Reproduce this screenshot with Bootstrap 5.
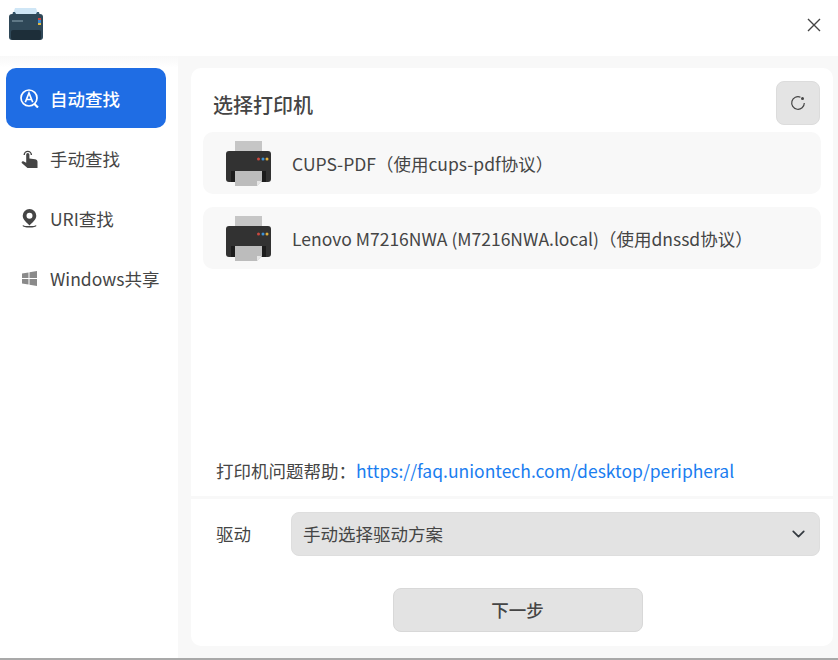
<!DOCTYPE html>
<html lang="zh-CN">
<head>
    <meta charset="UTF-8">
    <meta name="viewport" content="width=device-width, initial-scale=1.0">
    <title>选择打印机</title>
    <link href="https://cdn.jsdelivr.net/npm/bootstrap@5.3.2/dist/css/bootstrap.min.css" rel="stylesheet">
    <style>
        html, body { height: 100%; }
        body {
            margin: 0;
            overflow: hidden;
            background: #fff;
            color: #454545;
            font-family: "Noto Sans CJK SC", "Noto Sans", sans-serif;
            font-size: 17.5px;
        }
        .app-window { height: 660px; border-bottom: 2px solid #a9a9a9; }

        /* Title bar */
        .titlebar { height: 56px; padding: 8px 17px 0 9px; }
        .close-btn { margin-top: 10px; line-height: 0; }

        /* Side navigation */
        .sidebar { width: 178px; padding: 12px 12px 0 6px; background: linear-gradient(#f8f8f8, #fff 12px); }
        .side-item { height: 60px; width: 160px; padding-left: 14px; gap: 11px; border-radius: 10px; color: #454545; text-decoration: none; }
        .side-item.active { background: #1f6de4; color: #fff; font-weight: 500; }
        .side-item svg { flex: none; }
        .side-item span { padding-top: 2px; }

        /* Main panel */
        .content { background: #f8f8f8; padding: 12px 5px 12px 13px; }
        .panel { background: #fff; border-radius: 10px; }
        .panel-head { height: 64px; padding: 13px 13px 0 22px; }
        .panel-title { font-size: 20px; font-weight: 500; margin: 12px 0 0; }
        .refresh-btn { width: 44px; height: 44px; padding: 0; background: #e4e4e4; border: 1px solid #dcdcdc; border-radius: 8px; }
        .printer-list { padding: 0 12px 0 12px; gap: 13px; }
        .printer-item { height: 62px; padding-left: 23px; gap: 21px; background: #f8f8f8; border-radius: 10px; }
        .printer-item span { padding-top: 2px; }
        .help-line { margin-top: auto; padding: 0 0 10px 25px; height: 40px; line-height: 29px; }
        .help-line a { color: #1a7df0; text-decoration: none; }
        .driver-row { border-top: 3px solid #f8f8f8; padding: 13px 13px 0 25px; }
        .driver-label { width: 75px; }
        .driver-select {
            flex: 1;
            height: 44px;
            padding: 0 36px 0 11px;
            background-color: #e3e3e3;
            background-position: right 11px center;
            background-size: 19px 14px;
            border: 1px solid #dedede;
            border-radius: 8px;
            color: #454545;
            font-size: 17.5px;
        }
        .next-btn { width: 250px; height: 44px; padding: 0; background: #e3e3e3; border: 1px solid #d8d8d8; border-radius: 8px; color: #454545; font-size: 17.5px; font-weight: 500; }
        .panel-foot { padding: 32px 0 14px 11px; }
    </style>
</head>
<body>
    <div class="app-window d-flex flex-column">
        <!-- Title bar -->
        <div class="titlebar d-flex justify-content-between align-items-start">
            <svg width="34" height="32" viewBox="0 0 34 32">
                <path d="M6 0h21l2 6H4z" fill="#cfe6f6"/>
                <path d="M4 4h2l1 2h20l1-2h2l1 4H3z" fill="#35566a"/>
                <rect x="0" y="6" width="34" height="26" rx="3" fill="#2f4858"/>
                <rect x="2" y="22" width="30" height="10" rx="2" fill="#1d2e39"/>
                <rect x="3" y="12" width="11" height="2" fill="#5f7886"/>
                <rect x="29" y="10" width="3" height="2" fill="#d0443c"/>
                <rect x="29" y="12" width="3" height="3" fill="#3a86cf"/>
                <rect x="29" y="15" width="3" height="2" fill="#e2b93f"/>
            </svg>
            <div class="close-btn">
                <svg width="14" height="14" viewBox="0 0 14 14"><path d="M1 1l12 12M13 1L1 13" stroke="#444" stroke-width="1.4" fill="none"/></svg>
            </div>
        </div>

        <div class="d-flex flex-grow-1" style="min-height: 0">
            <!-- Side navigation -->
            <nav class="sidebar d-flex flex-column">
                <a href="#" class="side-item active d-flex align-items-center">
                    <svg width="19" height="19" viewBox="0 0 19 19" fill="none" stroke="#fff">
                        <circle cx="9" cy="9" r="8" stroke-width="1.700"/>
                        <path d="M5.300 13.300L9 4l3.700 9.300M6.500 10.500h5" stroke-width="1.700"/>
                        <path d="M14 14.500l4 4" stroke-width="2.200"/>
                    </svg>
                    <span>自动查找</span>
                </a>
                <a href="#" class="side-item d-flex align-items-center">
                    <svg width="19" height="19" viewBox="0 0 19 19">
                        <path d="M6.200 5.500a1.600 1.600 0 0 1 3.200 0v4l5.600.8c1.300.2 2.500 1 2.500 2.400V19H7.500L2 14.300c-1.100-1.200.3-2.800 1.800-1.800l2.400 1.300z" fill="#454545"/>
                        <path d="M4.200 6a3.600 3.600 0 1 1 7.200 0" fill="none" stroke="#454545" stroke-width="1.400"/>
                    </svg>
                    <span>手动查找</span>
                </a>
                <a href="#" class="side-item d-flex align-items-center">
                    <svg width="19" height="19" viewBox="0 0 19 19">
                        <path d="M9.500 0a6.800 6.800 0 0 0-6.800 6.800c0 4.200 4.700 7.200 6.800 9.700 2.100-2.500 6.800-5.500 6.800-9.700A6.800 6.800 0 0 0 9.500 0zm0 9.800a3 3 0 1 1 0-6 3 3 0 0 1 0 6z" fill="#454545"/>
                        <path d="M3 16.500C4 18.300 15 18.300 16 16.500" fill="none" stroke="#454545" stroke-width="1.500"/>
                    </svg>
                    <span>URI查找</span>
                </a>
                <a href="#" class="side-item d-flex align-items-center">
                    <svg width="19" height="19" viewBox="0 0 19 19" fill="#8a8a8a">
                        <path d="M2 4.500l6.500-1v5.500H2zM9.500 3.300L17 2v7H9.500zM2 10h6.500v5.500L2 14.500zM9.500 10H17v7l-7.500-1.300z"/>
                    </svg>
                    <span>Windows共享</span>
                </a>
            </nav>

            <!-- Main panel -->
            <main class="content flex-grow-1 d-flex" style="min-width: 0">
                <div class="panel flex-grow-1 d-flex flex-column">
                    <div class="panel-head d-flex justify-content-between align-items-start">
                        <h1 class="panel-title">选择打印机</h1>
                        <button type="button" class="refresh-btn d-flex align-items-center justify-content-center">
                            <svg width="16" height="16" viewBox="0 0 16 16" fill="none">
                                <path d="M10.500 2.200A6.300 6.300 0 1 0 14.300 8" stroke="#454545" stroke-width="1.200"/>
                                <circle cx="12.500" cy="3.500" r="1.500" fill="#454545"/>
                            </svg>
                        </button>
                    </div>

                    <div class="printer-list d-flex flex-column">
                        <div class="printer-item d-flex align-items-center">
                            <svg width="45" height="45" viewBox="0 0 45 45">
                                <rect x="9" y="0" width="27" height="14" fill="#c6c6c6"/>
                                <rect x="0" y="10" width="45" height="31" rx="3" fill="#323232"/>
                                <rect x="5" y="30" width="35" height="11" fill="#1c1c1c"/>
                                <path d="M9 30h27v10l-5 5H9z" fill="#bcbcbc"/>
                                <path d="M36 40l-5 5v-5z" fill="#e6e6e6"/>
                                <circle cx="32.500" cy="18" r="1.500" fill="#c9483f"/>
                                <circle cx="37" cy="18" r="1.500" fill="#3d93d8"/>
                                <circle cx="41" cy="18" r="1.500" fill="#dfae3c"/>
                            </svg>
                            <span>CUPS-PDF（使用cups-pdf协议）</span>
                        </div>
                        <div class="printer-item d-flex align-items-center">
                            <svg width="45" height="45" viewBox="0 0 45 45">
                                <rect x="9" y="0" width="27" height="14" fill="#c6c6c6"/>
                                <rect x="0" y="10" width="45" height="31" rx="3" fill="#323232"/>
                                <rect x="5" y="30" width="35" height="11" fill="#1c1c1c"/>
                                <path d="M9 30h27v10l-5 5H9z" fill="#bcbcbc"/>
                                <path d="M36 40l-5 5v-5z" fill="#e6e6e6"/>
                                <circle cx="32.500" cy="18" r="1.500" fill="#c9483f"/>
                                <circle cx="37" cy="18" r="1.500" fill="#3d93d8"/>
                                <circle cx="41" cy="18" r="1.500" fill="#dfae3c"/>
                            </svg>
                            <span>Lenovo M7216NWA (M7216NWA.local)（使用dnssd协议）</span>
                        </div>
                    </div>

                    <div class="help-line">打印机问题帮助：<a href="#">https://faq.uniontech.com/desktop/peripheral</a></div>

                    <div class="driver-row d-flex align-items-center">
                        <span class="driver-label flex-shrink-0">驱动</span>
                        <select class="form-select driver-select">
                            <option>手动选择驱动方案</option>
                        </select>
                    </div>

                    <div class="panel-foot d-flex justify-content-center">
                        <button type="button" class="btn next-btn">下一步</button>
                    </div>
                </div>
            </main>
        </div>
    </div>

    <script src="https://cdn.jsdelivr.net/npm/bootstrap@5.3.2/dist/js/bootstrap.bundle.min.js"></script>
</body>
</html>
